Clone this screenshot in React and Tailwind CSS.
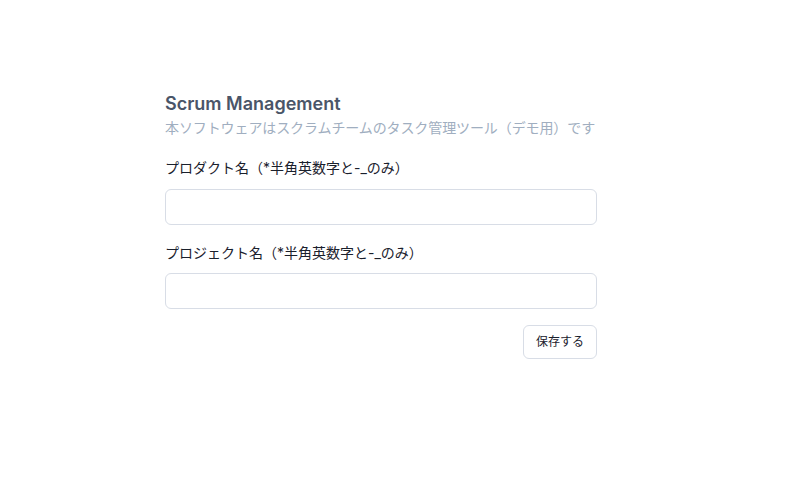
export default function App() {
  return (
    <div className="min-h-[487px] bg-white font-['Inter','Noto_Sans_CJK_JP',sans-serif]">
      <div className="w-[432px] ml-[165px] pt-[93px]">
        <h1 className="text-[18px] leading-[22px] font-semibold text-[#4a5568]">Scrum Management</h1>
        <p className="mt-[3px] text-[14px] leading-[20px] text-[#a0aec0] whitespace-nowrap tracking-[-0.1px]">
          本ソフトウェアはスクラムチームのタスク管理ツール（デモ用）です
        </p>

        <label className="block mt-[20px] text-[14px] leading-[20px] text-[#1a202c]">
          プロダクト名（*半角英数字と-_のみ）
        </label>
        <input className="block mt-[11px] w-full h-[36px] rounded-[6px] border border-[#d8dde6] px-3 outline-none" />

        <label className="block mt-[18px] text-[14px] leading-[20px] text-[#1a202c]">
          プロジェクト名（*半角英数字と-_のみ）
        </label>
        <input className="block mt-[10px] w-full h-[36px] rounded-[6px] border border-[#d8dde6] px-3 outline-none" />

        <div className="flex justify-end mt-[16px]">
          <button className="h-[34px] px-[12px] rounded-[6px] border border-[#d8dde6] text-[12px] text-[#1a202c] bg-white">
            保存する
          </button>
        </div>
      </div>
    </div>
  );
}
